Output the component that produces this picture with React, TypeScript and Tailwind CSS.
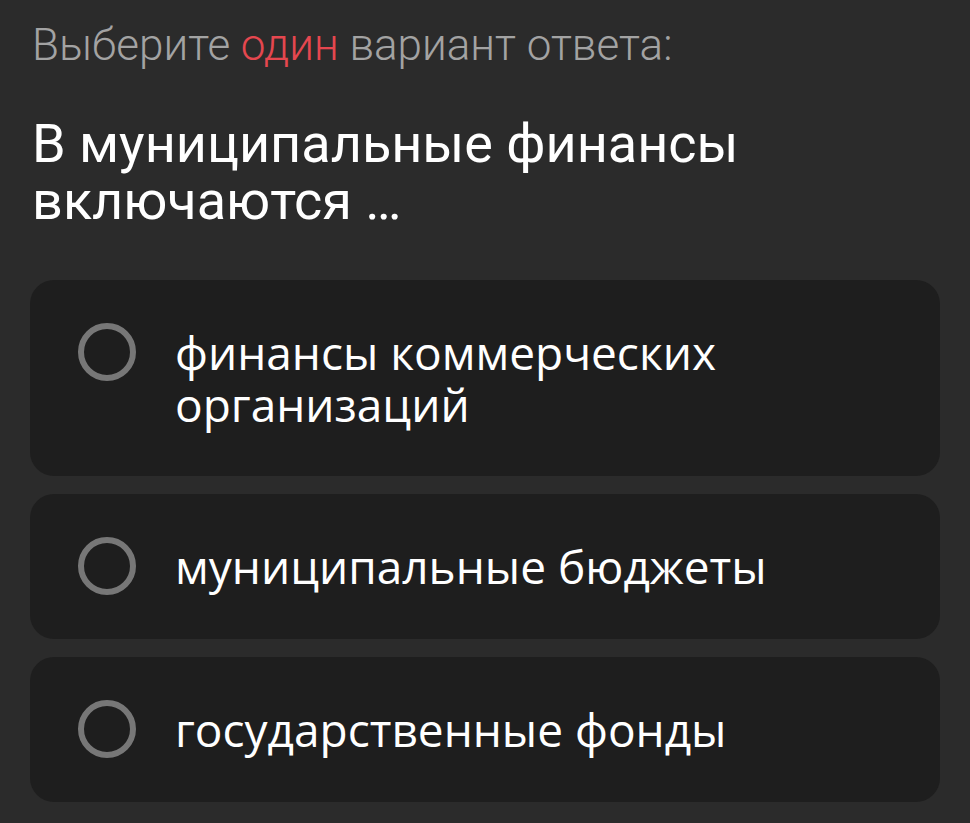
const options = [
  "финансы коммерческих организаций",
  "муниципальные бюджеты",
  "государственные фонды",
];

export default function App() {
  return (
    <div className="min-h-screen bg-[#2b2b2b] px-[30px] pt-[20px] pb-6 font-['Roboto',sans-serif]">
      {/* Instruction */}
      <p className="ml-[2px] text-[44px] leading-[50px] font-light text-[#a3a3a3]">
        Выберите <span className="text-[#e5474f]">один</span> вариант ответа:
      </p>

      {/* Question */}
      <h1 className="ml-[2px] mt-[45px] text-[54px] leading-[57px] font-normal text-white">
        В муниципальные финансы включаются …
      </h1>

      {/* Answers */}
      <div className="mt-[51px] flex flex-col gap-[18px]">
        {options.map((text, i) => (
          <label
            key={i}
            className={`flex items-start gap-[39px] rounded-[24px] bg-[#1e1e1e] pl-[48px] pr-8 pt-[46px] ${
              i === 0 ? "pb-[46px]" : "pb-[44px]"
            }`}
          >
            <span className="-mt-[3px] h-[58px] w-[58px] shrink-0 rounded-full border-[6px] border-[#777777]" />
            <span className="max-w-[620px] font-['Open_Sans',sans-serif] text-[46px] leading-[52px] text-white">
              {text}
            </span>
          </label>
        ))}
      </div>
    </div>
  );
}
